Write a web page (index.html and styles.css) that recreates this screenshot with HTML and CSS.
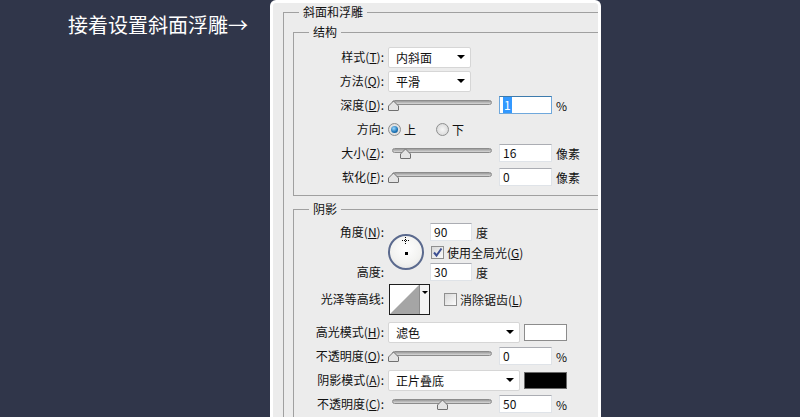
FILE: index.html
```html
<!DOCTYPE html>
<html lang="zh-CN">
<head>
    <meta charset="UTF-8">
    <meta name="viewport" content="width=device-width, initial-scale=1.0">
    <title>斜面和浮雕</title>
    <link rel="stylesheet" href="styles.css">
</head>
<body>
    <div class="page">
        <div class="intro">接着设置斜面浮雕→</div>

        <div class="panel">
            <fieldset class="group outer">
                <legend>斜面和浮雕</legend>

                <!-- 结构 -->
                <fieldset class="group inner">
                    <legend>结构</legend>
                    <div class="row">
                        <span class="lbl">样式(<u>T</u>):</span>
                        <div class="select"><span>内斜面</span><i class="arrow"></i></div>
                    </div>
                    <div class="row">
                        <span class="lbl">方法(<u>Q</u>):</span>
                        <div class="select"><span>平滑</span><i class="arrow"></i></div>
                    </div>
                    <div class="row">
                        <span class="lbl">深度(<u>D</u>):</span>
                        <div class="slider">
                            <div class="track"></div>
                            <svg class="thumb" style="left:0px" width="11" height="11" viewBox="0 0 11 11"><path d="M0.5 10 V6 L5.5 1 L10.5 6 V10 Q10.5 10.5 10 10.5 H1 Q0.5 10.5 0.5 10 Z" fill="#e4e4e4" stroke="#707070"/></svg>
                        </div>
                        <div class="num focus"><span class="sel">1</span></div>
                        <span class="unit">%</span>
                    </div>
                    <div class="row">
                        <span class="lbl">方向:</span>
                        <span class="radio on"></span><span class="opt">上</span>
                        <span class="radio second"></span><span class="opt">下</span>
                    </div>
                    <div class="row">
                        <span class="lbl">大小(<u>Z</u>):</span>
                        <div class="slider">
                            <div class="track"></div>
                            <svg class="thumb" style="left:12px" width="11" height="11" viewBox="0 0 11 11"><path d="M0.5 10 V6 L5.5 1 L10.5 6 V10 Q10.5 10.5 10 10.5 H1 Q0.5 10.5 0.5 10 Z" fill="#e4e4e4" stroke="#707070"/></svg>
                        </div>
                        <div class="num">16</div>
                        <span class="unit">像素</span>
                    </div>
                    <div class="row">
                        <span class="lbl">软化(<u>F</u>):</span>
                        <div class="slider">
                            <div class="track"></div>
                            <svg class="thumb" style="left:0px" width="11" height="11" viewBox="0 0 11 11"><path d="M0.5 10 V6 L5.5 1 L10.5 6 V10 Q10.5 10.5 10 10.5 H1 Q0.5 10.5 0.5 10 Z" fill="#e4e4e4" stroke="#707070"/></svg>
                        </div>
                        <div class="num">0</div>
                        <span class="unit">像素</span>
                    </div>
                </fieldset>

                <!-- 阴影 -->
                <fieldset class="group inner shadow">
                    <legend>阴影</legend>
                    <div class="angle">
                        <span class="lbl a-top">角度(<u>N</u>):</span>
                        <div class="dial">
                            <svg class="cross" width="7" height="7" viewBox="0 0 7 7"><path d="M3 0h1v1H3zM3 2h1v1H3zM3 4h1v1H3zM3 6h1v1H3zM0 3h1v1H0zM2 3h1v1H2zM4 3h1v1H4zM6 3h1v1H6z" fill="#000"/></svg>
                            <i class="dot"></i>
                        </div>
                        <div class="pair r1"><div class="num short">90</div><span class="unit">度</span></div>
                        <div class="pair r2">
                            <span class="check">
                                <svg width="11" height="11" viewBox="0 0 11 11"><path d="M2 5.5 L4.5 8.5 L9.5 1.5" fill="none" stroke="#3d4f92" stroke-width="2"/></svg>
                            </span>
                            <span class="check-text">使用全局光(<u>G</u>)</span>
                        </div>
                        <span class="lbl a-bottom">高度:</span>
                        <div class="pair r3"><div class="num short">30</div><span class="unit">度</span></div>
                    </div>

                    <div class="row contour-row">
                        <span class="lbl">光泽等高线:</span>
                        <div class="contour">
                            <svg width="29" height="29" viewBox="0 0 29 29"><polygon points="0,29 29,0 29,29" fill="#a5a5a5"/></svg>
                            <div class="contour-drop"><i class="arrow tiny"></i></div>
                        </div>
                        <span class="check empty"></span>
                        <span class="check-text">消除锯齿(<u>L</u>)</span>
                    </div>

                    <div class="row spaced">
                        <span class="lbl">高光模式(<u>H</u>):</span>
                        <div class="select wide"><span>滤色</span><i class="arrow"></i></div>
                        <span class="swatch"></span>
                    </div>
                    <div class="row">
                        <span class="lbl">不透明度(<u>O</u>):</span>
                        <div class="slider">
                            <div class="track"></div>
                            <svg class="thumb" style="left:0px" width="11" height="11" viewBox="0 0 11 11"><path d="M0.5 10 V6 L5.5 1 L10.5 6 V10 Q10.5 10.5 10 10.5 H1 Q0.5 10.5 0.5 10 Z" fill="#e4e4e4" stroke="#707070"/></svg>
                        </div>
                        <div class="num">0</div>
                        <span class="unit">%</span>
                    </div>
                    <div class="row">
                        <span class="lbl">阴影模式(<u>A</u>):</span>
                        <div class="select wide"><span>正片叠底</span><i class="arrow"></i></div>
                        <span class="swatch black"></span>
                    </div>
                    <div class="row">
                        <span class="lbl">不透明度(<u>C</u>):</span>
                        <div class="slider">
                            <div class="track"></div>
                            <svg class="thumb" style="left:49px" width="11" height="11" viewBox="0 0 11 11"><path d="M0.5 10 V6 L5.5 1 L10.5 6 V10 Q10.5 10.5 10 10.5 H1 Q0.5 10.5 0.5 10 Z" fill="#e4e4e4" stroke="#707070"/></svg>
                        </div>
                        <div class="num">50</div>
                        <span class="unit">%</span>
                    </div>
                </fieldset>
            </fieldset>
        </div>
    </div>
</body>
</html>
```

FILE: styles.css
```css
body {
    margin: 0;
    height: 417px;
    overflow: hidden;
    background-color: #30364a;
    font-family: "Noto Sans CJK SC", "Noto Sans", sans-serif;
    font-size: 12px;
    color: #111;
}
.page {
    display: flex;
    align-items: flex-start;
    height: 417px;
    padding-left: 68px;
    overflow: hidden;
}
.intro {
    flex: none;
    width: 202px;
    padding-top: 13px;
    font-size: 20px;
    line-height: 24px;
    color: #fff;
}
.panel {
    flex: none;
    width: 331px;
    height: 417px;
    box-sizing: border-box;
    background-color: #ececec;
    border: 3px solid #fff;
    border-bottom: none;
    border-radius: 6px 6px 0 0;
    padding: 1px 0 0 10px;
    overflow: hidden;
}

/* group boxes */
.group {
    margin: 0;
    padding: 0;
    min-width: 0;
    border: 1px solid #a0a0a0;
    border-right: none;
}
.group legend {
    margin-left: 15px;
    padding: 0 4px;
    line-height: 16px;
}
.group.outer {
    border-bottom: none;
    padding-bottom: 10px;
}
.group.inner {
    margin: 4px 0 0 9px;
    padding: 5px 0 6px 0;
}
.group.shadow {
    margin-top: 5px;
    border-bottom: none;
    padding-bottom: 10px;
}

/* rows */
.row {
    display: flex;
    align-items: center;
    height: 24px;
}
.lbl {
    flex: none;
    width: 90px;
    text-align: right;
    line-height: 16px;
    white-space: nowrap;
}
u {
    text-decoration: underline;
    text-underline-offset: 1px;
}
.unit {
    margin-left: 4px;
}

/* dropdown */
.select {
    flex: none;
    display: flex;
    align-items: center;
    justify-content: space-between;
    width: 83px;
    height: 21px;
    box-sizing: border-box;
    margin-left: 4px;
    padding: 0 5px 0 7px;
    background-color: #fff;
    border: 1px solid #d6d6d6;
    border-radius: 2px;
}
.select.wide {
    width: 132px;
}
.arrow {
    width: 0;
    height: 0;
    border-top: 4px solid #000;
    border-left: 4px solid transparent;
    border-right: 4px solid transparent;
}
.arrow.tiny {
    border-top-width: 3px;
    border-left-width: 3px;
    border-right-width: 3px;
}

/* slider */
.slider {
    flex: none;
    position: relative;
    width: 104px;
    height: 12px;
    margin-left: 4px;
}
.track {
    margin: 1px 0 0 4px;
    height: 3px;
    border: 1px solid #8c8c8c;
    border-radius: 3px;
    background: linear-gradient(#9a9a9a, #d8d8d8);
}
.thumb {
    position: absolute;
    top: 1px;
}

/* number fields */
.num {
    flex: none;
    width: 53px;
    height: 18px;
    box-sizing: border-box;
    margin-left: 7px;
    padding-left: 3px;
    line-height: 16px;
    background-color: #fff;
    border: 1px solid #dfe3e8;
    border-top-color: #abadb3;
}
.num.focus {
    border-color: #6fa8dc;
    border-top-color: #3d7bad;
}
.num.short {
    width: 42px;
    margin-left: 0;
}
.sel {
    display: inline-block;
    padding: 0 1px;
    background-color: #3399ff;
    color: #fff;
}

/* radio buttons */
.radio {
    flex: none;
    position: relative;
    width: 13px;
    height: 13px;
    box-sizing: border-box;
    margin-left: 4px;
    border: 1px solid #8e8f8f;
    border-radius: 50%;
    background: radial-gradient(circle, #f6f6f6, #d2d2d2);
}
.radio.on::after {
    content: "";
    position: absolute;
    left: 2px;
    top: 2px;
    width: 7px;
    height: 7px;
    border-radius: 50%;
    background: radial-gradient(circle at 40% 35%, #9ad8ff, #1b72b4 60%, #0d4a80);
}
.radio.second {
    margin-left: 20px;
}
.opt {
    margin-left: 3px;
}

/* angle block */
.angle {
    display: grid;
    grid-template-columns: 90px 40px auto;
    grid-template-rows: 20px 20px 20px;
}
.a-top {
    grid-column: 1;
    grid-row: 1;
    align-self: center;
}
.a-bottom {
    grid-column: 1;
    grid-row: 3;
    align-self: center;
}
.dial {
    grid-column: 2;
    grid-row: 1 / 4;
    align-self: center;
    position: relative;
    width: 36px;
    height: 36px;
    box-sizing: border-box;
    margin-left: 4px;
    border: 2px solid #5b6a8e;
    border-radius: 50%;
    background: radial-gradient(circle at 50% 40%, #ffffff, #f2f2f0 60%, #dcdcdc);
}
.cross {
    position: absolute;
    left: 12px;
    top: 1px;
}
.dot {
    position: absolute;
    left: 15px;
    top: 16px;
    width: 3px;
    height: 3px;
    background-color: #000;
}
.pair {
    grid-column: 3;
    display: flex;
    align-items: center;
    margin-left: 6px;
}
.r1 { grid-row: 1; }
.r2 { grid-row: 2; }
.r3 { grid-row: 3; }

/* checkboxes */
.check {
    flex: none;
    display: flex;
    align-items: center;
    justify-content: center;
    width: 13px;
    height: 13px;
    box-sizing: border-box;
    margin-left: 1px;
    border: 1px solid #8f8f8f;
    background: linear-gradient(135deg, #d8d8d8, #fbfbfb);
}
.check-text {
    margin-left: 3px;
    white-space: nowrap;
}
.check.empty {
    margin-left: 14px;
}

/* contour */
.contour-row {
    height: 32px;
    margin-top: 1px;
}
.contour {
    flex: none;
    display: flex;
    width: 41px;
    height: 31px;
    box-sizing: border-box;
    margin-left: 5px;
    border: 1px solid #1e1e1e;
    background-color: #fff;
}
.contour-drop {
    flex: 1;
    display: flex;
    justify-content: center;
    padding-top: 6px;
    border-left: 1px solid #8a8a8a;
    background-color: #f4f4f4;
}

/* colour swatches */
.row.spaced {
    margin-top: 5px;
}
.swatch {
    flex: none;
    width: 43px;
    height: 17px;
    box-sizing: border-box;
    margin-left: 4px;
    border: 1px solid #8c8c8c;
    background-color: #fff;
}
.swatch.black {
    background-color: #000;
    border-color: #6a6a6a;
}
```
